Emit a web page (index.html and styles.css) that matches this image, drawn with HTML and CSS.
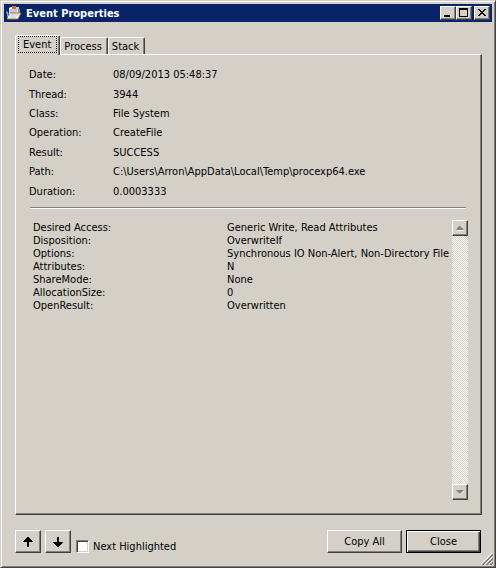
FILE: index.html
```html
<!DOCTYPE html>
<html lang="en">
<head>
    <meta charset="UTF-8">
    <meta name="viewport" content="width=device-width, initial-scale=1.0">
    <title>Event Properties</title>
    <link rel="stylesheet" href="styles.css">
</head>
<body>
    <div class="window">
        <header class="title-bar">
            <svg class="app-icon" width="16" height="16" viewBox="0 0 16 16" aria-hidden="true">
                <path d="M3 3l2-1h7v7H3z" fill="#f4f6fa"/>
                <path d="M6 1h4v3H6z" fill="#d9653a"/>
                <path d="M10 2h3v3h-3z" fill="#f0c98a"/>
                <path d="M4 5h7M3 7h8" stroke="#7f9cc8"/>
                <path d="M12 4h2v4h-2z" fill="#6f9be0"/>
                <path d="M0 6l2 1 1 6-1 1z" fill="#8aa7d8"/>
                <path d="M4 8h11l-3 6H1z" fill="#f1f3f5"/>
                <path d="M4 8h11l-3 6H1" fill="none" stroke="#a87428"/>
                <path d="M5 10h7M4 12h6" stroke="#b9c6da"/>
            </svg>
            <h1>Event Properties</h1>
            <div class="caption-buttons">
                <button type="button" class="caption-btn" aria-label="Minimize">
                    <svg width="14" height="12" viewBox="0 0 14 12"><path d="M3 8h6v2H3z"/></svg>
                </button>
                <button type="button" class="caption-btn" aria-label="Maximize">
                    <svg width="14" height="12" viewBox="0 0 14 12"><path fill-rule="evenodd" d="M2 1h9v9H2zM3 3v6h7V3z"/></svg>
                </button>
                <button type="button" class="caption-btn close-btn" aria-label="Close window">
                    <svg width="14" height="12" viewBox="0 0 14 12" shape-rendering="crispEdges"><path d="M3 2h2v1h1v1h2V3h1V2h2v1h-1v1H9v1H8v1h1v1h1v1h1v1H9V8H8V7H6v1H5v1H3V8h1V7h1V6h1V5H5V4H4V3H3z"/></svg>
                </button>
            </div>
        </header>

        <main class="content">
            <div class="tabs" role="tablist">
                <button type="button" class="tab active" role="tab" aria-selected="true"><span>Event</span></button>
                <button type="button" class="tab" role="tab" aria-selected="false"><span>Process</span></button>
                <button type="button" class="tab" role="tab" aria-selected="false"><span>Stack</span></button>
            </div>

            <section class="panel" role="tabpanel">
                <dl class="summary">
                    <dt>Date:</dt><dd>08/09/2013 05:48:37</dd>
                    <dt>Thread:</dt><dd>3944</dd>
                    <dt>Class:</dt><dd>File System</dd>
                    <dt>Operation:</dt><dd>CreateFile</dd>
                    <dt>Result:</dt><dd>SUCCESS</dd>
                    <dt>Path:</dt><dd>C:\Users\Arron\AppData\Local\Temp\procexp64.exe</dd>
                    <dt>Duration:</dt><dd>0.0003333</dd>
                </dl>
                <hr class="divider">
                <div class="details">
                    <dl class="detail-list">
                        <dt>Desired Access:</dt><dd>Generic Write, Read Attributes</dd>
                        <dt>Disposition:</dt><dd>OverwriteIf</dd>
                        <dt>Options:</dt><dd>Synchronous IO Non-Alert, Non-Directory File</dd>
                        <dt>Attributes:</dt><dd>N</dd>
                        <dt>ShareMode:</dt><dd>None</dd>
                        <dt>AllocationSize:</dt><dd>0</dd>
                        <dt>OpenResult:</dt><dd>Overwritten</dd>
                    </dl>
                    <div class="scrollbar">
                        <button type="button" class="scroll-btn" aria-label="Scroll up" disabled>
                            <svg width="8" height="6" viewBox="0 0 8 6"><path d="M1 5h7v1H1z" fill="#fff"/><path d="M3 1h1l4 4H0z" fill="#808080"/></svg>
                        </button>
                        <button type="button" class="scroll-btn" aria-label="Scroll down" disabled>
                            <svg width="8" height="6" viewBox="0 0 8 6"><path d="M8 1v1L4 6H3z" fill="#fff"/><path d="M0 1h8L4 5z" fill="#808080"/></svg>
                        </button>
                    </div>
                </div>
            </section>

            <footer class="footer">
                <button type="button" class="btn arrow-btn" aria-label="Previous event">
                    <svg width="10" height="10" viewBox="0 0 10 10" shape-rendering="crispEdges"><path d="M4 0h2v1h1v1h1v1h1v1h1v1H6v5H4V5H0V4h1V3h1V2h1V1h1z"/></svg>
                </button>
                <button type="button" class="btn arrow-btn" aria-label="Next event">
                    <svg width="10" height="10" viewBox="0 0 10 10" shape-rendering="crispEdges"><path d="M4 10h2V9h1V8h1V7h1V6h1V5H6V0H4v5H0v1h1v1h1v1h1v1h1z"/></svg>
                </button>
                <label class="check"><input type="checkbox">Next Highlighted</label>
                <button type="button" class="btn text-btn push">Copy All</button>
                <button type="button" class="btn text-btn default">Close</button>
            </footer>
        </main>

        <svg class="grip" width="12" height="12" viewBox="0 0 12 12" aria-hidden="true">
            <path d="M0 11L11 0M4 11l7-7M8 11l3-3" stroke="#fff"/>
            <path d="M1 12L12 1M2 12L12 2M5 12l7-7M6 12l6-6M9 12l3-3M10 12l2-2" stroke="#808080"/>
        </svg>
    </div>
</body>
</html>
```

FILE: styles.css
```css
* {
    margin: 0;
    padding: 0;
    box-sizing: border-box;
}

body {
    background: #d4d0c8;
    color: #000;
    font: 11px/13px Tahoma, "DejaVu Sans Condensed", "DejaVu Sans", sans-serif;
}

button {
    font: inherit;
    color: inherit;
    background: #d4d0c8;
}

svg {
    display: block;
}

.window {
    position: relative;
    display: flex;
    flex-direction: column;
    min-height: 100vh;
    padding: 3px;
    border: 1px solid;
    border-color: #d4d0c8 #404040 #404040 #d4d0c8;
    box-shadow: inset 1px 1px #fff, inset -1px -1px #808080;
}

/* Title bar */
.title-bar {
    display: flex;
    align-items: center;
    gap: 4px;
    height: 18px;
    padding: 0 2px;
    background: #0a246a;
    color: #fff;
}

.title-bar h1 {
    flex: 1;
    font-size: 11px;
    font-weight: bold;
}

.caption-buttons {
    display: flex;
}

.caption-btn {
    width: 16px;
    height: 14px;
    border: 1px solid;
    border-color: #fff #404040 #404040 #fff;
    box-shadow: inset -1px -1px #808080;
}

.close-btn {
    margin-left: 2px;
}

/* Tabs */
.content {
    flex: 1;
    display: flex;
    flex-direction: column;
    padding: 13px 10px 11px 11px;
}

.tabs {
    display: flex;
    align-items: flex-end;
}

.tab {
    height: 17px;
    padding: 0 5px 0 3px;
    border: 1px solid;
    border-color: #fff #404040 transparent #fff;
    border-bottom: 0;
    border-radius: 2px 2px 0 0;
    box-shadow: inset -1px 0 #808080;
}

.tab.active {
    position: relative;
    height: 20px;
    margin-bottom: -1px;
    padding: 0 2px 2px;
}

.tab.active span {
    display: block;
    padding: 1px 5px 1px 4px;
    border: 1px dotted #000;
}

.panel {
    flex: 1;
    display: flex;
    flex-direction: column;
    padding: 10px 13px 14px;
    border: 1px solid;
    border-color: #fff #404040 #404040 #fff;
    box-shadow: inset -1px -1px #808080;
}

.summary {
    display: grid;
    grid-template-columns: 84px 1fr;
    grid-auto-rows: 1fr;
    align-items: center;
    height: 136px;
}

.divider {
    margin: 6px 2px 11px 1px;
    border: 0;
    border-top: 1px solid #808080;
    border-bottom: 1px solid #fff;
}

.details {
    flex: 1;
    display: flex;
}

.detail-list {
    flex: 1;
    display: grid;
    grid-template-columns: 194px 1fr;
    align-content: start;
    padding: 1px 0 0 4px;
    white-space: nowrap;
}

.scrollbar {
    display: flex;
    flex-direction: column;
    justify-content: space-between;
    width: 16px;
    background: repeating-conic-gradient(#fff 0 25%, #d4d0c8 0 50%) 0 0 / 2px 2px;
}

.scroll-btn {
    display: flex;
    align-items: center;
    justify-content: center;
    height: 16px;
    border: 1px solid;
    border-color: #fff #404040 #404040 #fff;
    box-shadow: inset -1px -1px #808080;
}

/* Bottom row */
.footer {
    display: flex;
    gap: 4px;
    margin-top: 15px;
    padding-right: 1px;
}

.btn {
    display: flex;
    align-items: center;
    justify-content: center;
    height: 23px;
    border: 1px solid;
    border-color: #fff #404040 #404040 #fff;
    box-shadow: inset -1px -1px #808080;
}

.arrow-btn {
    width: 26px;
}

.text-btn {
    width: 75px;
}

.push {
    margin-left: auto;
}

.default {
    border-color: #000;
    box-shadow: inset 1px 1px #fff, inset -1px -1px #404040, inset -2px -2px #808080;
}

.check {
    display: flex;
    align-items: center;
    align-self: flex-end;
    gap: 4px;
    padding-left: 1px;
}

.check input {
    appearance: none;
    width: 13px;
    height: 13px;
    background: #fff;
    border: 1px solid;
    border-color: #808080 #fff #fff #808080;
    box-shadow: inset 1px 1px #404040, inset -1px -1px #d4d0c8;
}

.check input:checked {
    background: #fff radial-gradient(#000 3px, transparent 0);
}

.grip {
    position: absolute;
    right: 2px;
    bottom: 2px;
}
```
